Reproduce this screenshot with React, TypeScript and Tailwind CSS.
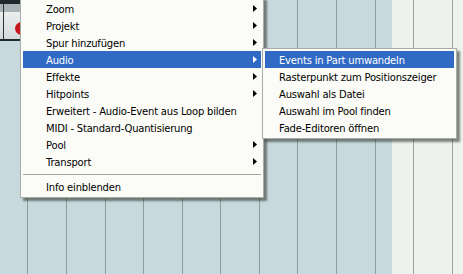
import React from "react";

const mainItems: { label: string; sub?: boolean; active?: boolean }[] = [
  { label: "Zoom", sub: true },
  { label: "Projekt", sub: true },
  { label: "Spur hinzufügen", sub: true },
  { label: "Audio", sub: true, active: true },
  { label: "Effekte", sub: true },
  { label: "Hitpoints", sub: true },
  { label: "Erweitert - Audio-Event aus Loop bilden" },
  { label: "MIDI - Standard-Quantisierung" },
  { label: "Pool", sub: true },
  { label: "Transport", sub: true },
];

const subItems = [
  { label: "Events in Part umwandeln", active: true },
  { label: "Rasterpunkt zum Positionszeiger" },
  { label: "Auswahl als Datei" },
  { label: "Auswahl im Pool finden" },
  { label: "Fade-Editoren öffnen" },
];

const columns: string[] = [
  "w-[27px] bg-[#c8d9de]",
  "w-[39px] bg-[#c8d9de] border-l border-[#8d9d9f]",
  "w-[39px] bg-[#c8d9de] border-l border-[#8d9d9f]",
  "w-[38px] bg-[#c8d9de] border-l border-[#8d9d9f]",
  "w-[39px] bg-[#c8d9de] border-l border-[#8d9d9f]",
  "w-[38px] bg-[#c8d9de] border-l border-[#8d9d9f]",
  "w-[39px] bg-[#c8d9de] border-l border-[#8d9d9f]",
  "w-[38px] bg-[#c8d9de] border-l border-[#8d9d9f]",
  "w-[39px] bg-[#c8d9de] border-l border-[#8d9d9f]",
  "w-[39px] bg-[#c8d9de] border-l border-[#8d9d9f]",
  "w-[17px] bg-[#c8d9de] border-l border-[#8d9d9f]",
  "w-[21px] bg-[#eef2ec]",
  "w-[39px] bg-[#eef2ec] border-l border-[#9aa39c]",
  "flex-1 bg-[#eef2ec] border-l border-[#9aa39c]",
];

function Arrow({ white }: { white?: boolean }) {
  return (
    <svg width="4" height="7" viewBox="0 0 4 7" className="block">
      <polygon points="0,0 4,3.5 0,7" fill={white ? "#ffffff" : "#000000"} />
    </svg>
  );
}

export default function App() {
  return (
    <div
      className="relative w-[463px] h-[274px] overflow-hidden"
      style={{ fontFamily: '"DejaVu Sans", Verdana, sans-serif' }}
    >
      {/* canvas grid */}
      <div className="flex h-full w-full">
        {columns.map((c, i) => (
          <div key={i} className={c + " h-full"} />
        ))}
      </div>

      {/* track part at top-left */}
      <div className="absolute left-0 top-0 w-[160px] h-[41px] flex flex-col">
        <div className="h-[4px] bg-[#1e2a2c]" />
        <div className="h-[8px] bg-[#a9b3b6] border-l-[3px] border-[#a9b3b6] flex">
          <div className="w-px bg-[#2a3436]" />
        </div>
        <div className="flex-1 bg-gradient-to-b from-[#eceeee] to-[#d3d9da] flex">
          <div className="w-[3px]" />
          <div className="w-px bg-[#2a3436]" />
          <div className="pl-[11px] pt-[10px]">
            <div className="w-[13px] h-[13px] rounded-full bg-[#c8141a]" />
          </div>
        </div>
        <div className="h-[2px] bg-[#1e2a2c]" />
      </div>

      {/* main context menu */}
      <div className="absolute left-[20px] top-[-3px] w-[244px] bg-[#fbfcf7] border border-[#a7aca6] p-[2px] shadow-[3px_3px_2px_rgba(50,58,50,0.6)] text-[10px] leading-[17px] tracking-[-0.2px]">
        {mainItems.map((it) => (
          <div
            key={it.label}
            className={
              "h-[17px] flex items-center pl-[23px] pr-[4px] " +
              (it.active ? "bg-[#316ac5] text-white" : "text-black")
            }
          >
            <span className="flex-1 whitespace-nowrap pt-px">{it.label}</span>
            {it.sub && <Arrow white={it.active} />}
          </div>
        ))}
        <div className="h-[8px] flex flex-col justify-center">
          <div className="h-px bg-[#aca899]" />
        </div>
        <div className="h-[17px] flex items-center pl-[23px] text-black">
          <span className="whitespace-nowrap pt-px">Info einblenden</span>
        </div>
      </div>

      {/* submenu */}
      <div className="absolute left-[262px] top-[48px] w-[195px] bg-[#fbfcf7] border border-[#a7aca6] p-[2px] shadow-[3px_3px_2px_rgba(50,58,50,0.6)] text-[10px] leading-[17px] tracking-[-0.2px]">
        {subItems.map((it) => (
          <div
            key={it.label}
            className={
              "h-[17px] flex items-center pl-[14px] " +
              (it.active ? "bg-[#316ac5] text-white" : "text-black")
            }
          >
            <span className="whitespace-nowrap pt-px">{it.label}</span>
          </div>
        ))}
      </div>
    </div>
  );
}
